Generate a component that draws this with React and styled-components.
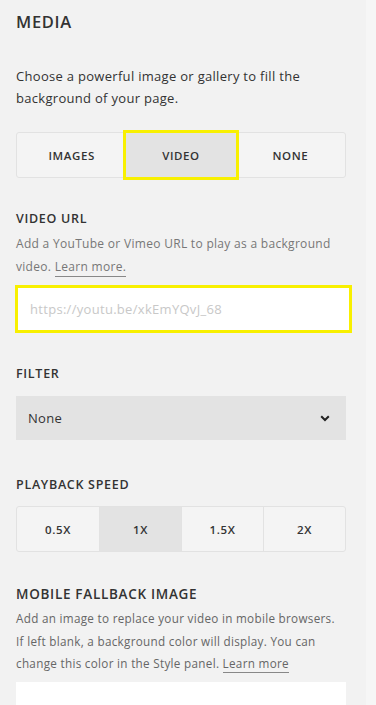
import styled, { createGlobalStyle } from 'styled-components';

const GlobalStyle = createGlobalStyle`
  body {
    margin: 0;
    background: #f2f2f2;
    font-family: "Open Sans", "Liberation Sans", sans-serif;
    color: #333;
  }
`;

const Panel = styled.div`
  width: 376px;
  height: 705px;
  overflow: hidden;
  display: flex;
`;

const Content = styled.div`
  width: 330px;
  padding: 12px 0 0 16px;
`;

const Gutter = styled.div`
  flex: 1;
`;

const ScrollStrip = styled.div`
  width: 10px;
  background: #f6f6f6;
`;

const Title = styled.h1`
  margin: 0;
  font-size: 16.5px;
  font-weight: 600;
  letter-spacing: 0.7px;
  color: #333;
  line-height: 20px;
`;

const Intro = styled.p`
  margin: 33px 0 0;
  font-size: 13px;
  letter-spacing: 0.3px;
  line-height: 22px;
  color: #333;
  white-space: nowrap;
`;

const Segments = styled.div`
  display: grid;
  grid-template-columns: repeat(${p => p.$count}, 1fr);
  margin-top: ${p => p.$top}px;
  height: 44px;
  border: 1px solid #e2e2e2;
  border-radius: 3px;
  background: #f4f4f4;
`;

const Segment = styled.div`
  display: flex;
  align-items: center;
  justify-content: center;
  font-size: 11.5px;
  font-weight: 600;
  letter-spacing: 0.6px;
  color: #333;
  background: ${p => (p.$active ? '#e3e3e3' : 'transparent')};
  border-left: ${p => (p.$divider ? '1px solid #e2e2e2' : 'none')};
  outline: ${p => (p.$focus ? '3px solid #f8f000' : 'none')};
`;

const Label = styled.h2`
  margin: ${p => p.$top}px 0 0;
  font-size: ${p => p.$size || 12.5}px;
  font-weight: 600;
  letter-spacing: 0.7px;
  color: #333;
  line-height: 18px;
`;

const Help = styled.p`
  margin: 4px 0 0;
  font-size: ${p => p.$size || 12}px;
  letter-spacing: 0.3px;
  line-height: ${p => p.$lh || 23}px;
  color: ${p => p.$color || '#777'};
  white-space: nowrap;
`;

const Link = styled.a`
  color: inherit;
  text-decoration: none;
  border-bottom: 1px solid #888;
  padding-bottom: 1px;
`;

const UrlInput = styled.input`
  display: block;
  box-sizing: border-box;
  width: 337px;
  height: 48px;
  margin: 7px 0 0 -1px;
  padding: 0 12px;
  border: 3px solid #f8f000;
  background: #fff;
  font-family: inherit;
  font-size: 13px;
  letter-spacing: 0.3px;
  color: #333;
  outline: none;
  &::placeholder {
    color: #c8c8c8;
  }
`;

const Select = styled.div`
  display: flex;
  align-items: center;
  justify-content: space-between;
  margin-top: 13px;
  height: 44px;
  padding: 0 16px 0 12px;
  background: #e3e3e3;
  font-size: 13px;
  letter-spacing: 0.3px;
  color: #333;
`;

const Chevron = () => (
  <svg width="10" height="7" viewBox="0 0 10 7">
    <path d="M1.2 1.2 5 5 8.8 1.2" fill="none" stroke="#222" strokeWidth="2" />
  </svg>
);

const ImageBox = styled.div`
  margin-top: 7px;
  height: 40px;
  background: #fff;
`;

function App() {
  return (
    <Panel>
      <GlobalStyle />
      <Content>
        <Title>MEDIA</Title>
        <Intro>
          Choose a powerful image or gallery to fill the
          <br />
          background of your page.
        </Intro>

        <Segments $count={3} $top={23}>
          <Segment>IMAGES</Segment>
          <Segment $active $focus>VIDEO</Segment>
          <Segment>NONE</Segment>
        </Segments>

        <Label $top={32}>VIDEO URL</Label>
        <Help>
          Add a YouTube or Vimeo URL to play as a background
          <br />
          video. <Link>Learn more.</Link>
        </Help>
        <UrlInput placeholder="https://youtu.be/xkEmYQvJ_68" />

        <Label $top={32}>FILTER</Label>
        <Select>
          None
          <Chevron />
        </Select>

        <Label $top={36}>PLAYBACK SPEED</Label>
        <Segments $count={4} $top={12}>
          <Segment>0.5X</Segment>
          <Segment $active $divider>1X</Segment>
          <Segment $divider>1.5X</Segment>
          <Segment $divider>2X</Segment>
        </Segments>

        <Label $top={33} $size={13.5}>MOBILE FALLBACK IMAGE</Label>
        <Help $color="#666" $size={11.7} $lh={22.5}>
          Add an image to replace your video in mobile browsers.
          <br />
          If left blank, a background color will display. You can
          <br />
          change this color in the Style panel. <Link>Learn more</Link>
        </Help>
        <ImageBox />
      </Content>
      <Gutter />
      <ScrollStrip />
    </Panel>
  );
}

export default App;
